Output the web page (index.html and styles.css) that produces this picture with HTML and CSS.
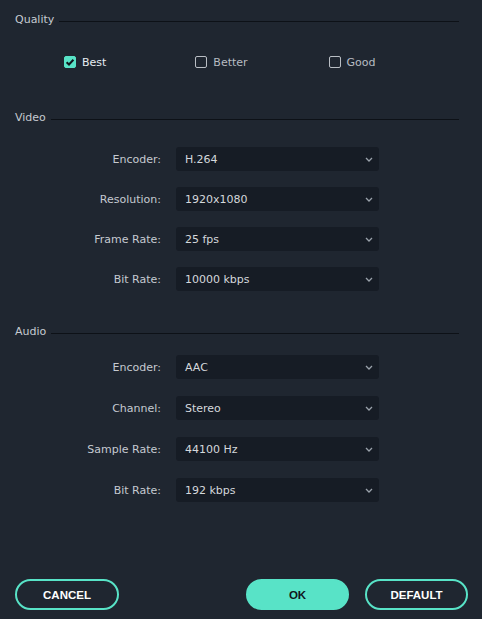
FILE: index.html
```html
<!DOCTYPE html>
<html>
<head>
<meta charset="utf-8">
<link rel="stylesheet" href="styles.css">
</head>
<body>
<div class="panel">
  <div class="section-head head-quality"><span class="head-title">Quality</span><span class="head-line"></span></div>
  <div class="quality-row">
    <label class="check check-best"><span class="box checked"><svg viewBox="0 0 12 12" width="12" height="12"><path d="M2.6 6.2 L5 8.5 L9.4 3.8" fill="none" stroke="#10171d" stroke-width="2"/></svg></span><span class="check-label active">Best</span></label>
    <label class="check check-better"><span class="box"></span><span class="check-label">Better</span></label>
    <label class="check check-good"><span class="box"></span><span class="check-label">Good</span></label>
  </div>

  <div class="section-head head-video"><span class="head-title">Video</span><span class="head-line"></span></div>
  <div class="fields fields-video">
    <div class="field"><span class="field-label">Encoder:</span><div class="select"><span>H.264</span><svg class="chev" viewBox="0 0 8 5" width="8" height="5"><path d="M1 1 L4 4 L7 1" fill="none" stroke="#9aa2ab" stroke-width="1.3"/></svg></div></div>
    <div class="field"><span class="field-label">Resolution:</span><div class="select"><span>1920x1080</span><svg class="chev" viewBox="0 0 8 5" width="8" height="5"><path d="M1 1 L4 4 L7 1" fill="none" stroke="#9aa2ab" stroke-width="1.3"/></svg></div></div>
    <div class="field"><span class="field-label">Frame Rate:</span><div class="select"><span>25 fps</span><svg class="chev" viewBox="0 0 8 5" width="8" height="5"><path d="M1 1 L4 4 L7 1" fill="none" stroke="#9aa2ab" stroke-width="1.3"/></svg></div></div>
    <div class="field"><span class="field-label">Bit Rate:</span><div class="select"><span>10000 kbps</span><svg class="chev" viewBox="0 0 8 5" width="8" height="5"><path d="M1 1 L4 4 L7 1" fill="none" stroke="#9aa2ab" stroke-width="1.3"/></svg></div></div>
  </div>

  <div class="section-head head-audio"><span class="head-title">Audio</span><span class="head-line"></span></div>
  <div class="fields fields-audio">
    <div class="field"><span class="field-label">Encoder:</span><div class="select"><span>AAC</span><svg class="chev" viewBox="0 0 8 5" width="8" height="5"><path d="M1 1 L4 4 L7 1" fill="none" stroke="#9aa2ab" stroke-width="1.3"/></svg></div></div>
    <div class="field"><span class="field-label">Channel:</span><div class="select"><span>Stereo</span><svg class="chev" viewBox="0 0 8 5" width="8" height="5"><path d="M1 1 L4 4 L7 1" fill="none" stroke="#9aa2ab" stroke-width="1.3"/></svg></div></div>
    <div class="field"><span class="field-label">Sample Rate:</span><div class="select"><span>44100 Hz</span><svg class="chev" viewBox="0 0 8 5" width="8" height="5"><path d="M1 1 L4 4 L7 1" fill="none" stroke="#9aa2ab" stroke-width="1.3"/></svg></div></div>
    <div class="field"><span class="field-label">Bit Rate:</span><div class="select"><span>192 kbps</span><svg class="chev" viewBox="0 0 8 5" width="8" height="5"><path d="M1 1 L4 4 L7 1" fill="none" stroke="#9aa2ab" stroke-width="1.3"/></svg></div></div>
  </div>

  <div class="buttons">
    <button class="btn btn-outline btn-cancel">CANCEL</button>
    <div class="buttons-right">
      <button class="btn btn-primary">OK</button>
      <button class="btn btn-outline">DEFAULT</button>
    </div>
  </div>
</div>
</body>
</html>
```
FILE: styles.css
```css
html, body {
  margin: 0;
  padding: 0;
  background: #1f2630;
}
body {
  font-family: "DejaVu Sans", Verdana, sans-serif;
  font-size: 11px;
  color: #c5cad0;
}
.panel {
  width: 482px;
  height: 619px;
  box-sizing: border-box;
  padding: 12px 23px 0 15px;
  display: flex;
  flex-direction: column;
}
.section-head {
  display: flex;
  align-items: center;
  height: 16px;
  gap: 5px;
}
.head-title {
  color: #c5cad0;
  line-height: 16px;
}
.head-line {
  flex: 1;
  height: 1px;
  background: #0d1117;
  margin-top: 2px;
}
.head-video { margin-top: 40px; }
.head-audio { margin-top: 33px; }
.quality-row {
  margin-top: 26px;
  height: 16px;
  display: flex;
  align-items: center;
}
.check {
  display: flex;
  align-items: center;
  gap: 6px;
  color: #b7bcc2;
}
.check-best { margin-left: 49px; }
.check-better { margin-left: 89px; }
.check-good { margin-left: 81px; }
.box {
  width: 12px;
  height: 12px;
  box-sizing: border-box;
  border: 1px solid #b9bec4;
  border-radius: 2px;
  display: block;
}
.box.checked {
  background: #58e3c7;
  border-color: #58e3c7;
  position: relative;
}
.box.checked svg {
  position: absolute;
  left: -1px;
  top: -1px;
}
.check-label.active { color: #e6ecf2; }
.fields {
  display: flex;
  flex-direction: column;
}
.fields-video { margin-top: 21px; gap: 16px; }
.fields-audio { margin-top: 15px; gap: 17px; }
.field {
  display: flex;
  align-items: center;
  height: 24px;
}
.field-label {
  width: 146px;
  text-align: right;
  color: #c5cad0;
}
.select {
  margin-left: 15px;
  width: 203px;
  height: 24px;
  box-sizing: border-box;
  background: #161c25;
  border-radius: 3px;
  display: flex;
  align-items: center;
  justify-content: space-between;
  padding: 0 6px 0 9px;
  color: #d4d8dc;
}
.chev { display: block; }
.buttons {
  margin-top: 77px;
  margin-right: -9px;
  display: flex;
  justify-content: space-between;
}
.buttons-right {
  display: flex;
  gap: 16px;
}
.btn {
  width: 103px;
  height: 31px;
  border-radius: 16px;
  box-sizing: border-box;
  font-family: "Liberation Sans", Arial, sans-serif;
  font-weight: bold;
  font-size: 11.5px;
  cursor: pointer;
  padding: 0;
}
.btn-cancel { width: 104px; }
.btn-outline {
  background: transparent;
  border: 2px solid #58e3c7;
  color: #ffffff;
}
.btn-primary {
  background: #58e3c7;
  border: 2px solid #58e3c7;
  color: #10171d;
}
```
